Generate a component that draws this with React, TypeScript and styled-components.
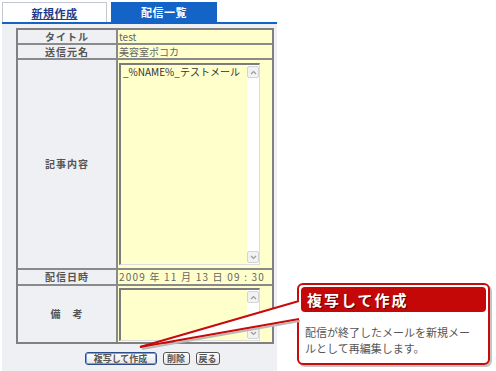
import React from 'react';
import styled, { createGlobalStyle } from 'styled-components';

const GlobalStyle = createGlobalStyle`
  html, body {
    margin: 0;
    padding: 0;
    background: #ffffff;
  }
  body {
    font-family: "Noto Sans CJK JP", "Liberation Sans", sans-serif;
  }
`;

const Page = styled.div`
  position: relative;
  width: 496px;
  height: 371px;
  overflow: hidden;
  padding-top: 2px;
  box-sizing: border-box;
`;

const TabBar = styled.div`
  margin-left: 2px;
  width: 275px;
  height: 20px;
  display: flex;
  gap: 4px;
  border-bottom: 2px solid #1464c8;
`;

const Tab = styled.div<{ $active?: boolean }>`
  width: ${(p) => (p.$active ? 106 : 105)}px;
  box-sizing: border-box;
  display: flex;
  align-items: center;
  justify-content: center;
  font-size: 11px;
  font-weight: bold;
  letter-spacing: 0.5px;
  background: ${(p) => (p.$active ? '#1464c8' : '#ffffff')};
  color: ${(p) => (p.$active ? '#ffffff' : '#1e3c8c')};
  border: ${(p) => (p.$active ? 'none' : '1px solid #c4c8d0')};
  border-bottom: none;
  text-decoration: ${(p) => (p.$active ? 'none' : 'underline')};
`;

const Panel = styled.div`
  margin-left: 2px;
  width: 275px;
  height: 347px;
  box-sizing: border-box;
  background: #eff0f3;
  padding: 4px 3px 0 14px;
`;

const Table = styled.div`
  width: 258px;
  box-sizing: border-box;
  border: 2px solid #808080;
  background: #8a8a8a;
  display: grid;
  grid-template-columns: 98px 1fr;
  grid-template-rows: 13px 13px 208px 14px 56px;
  gap: 2px;
`;

const Label = styled.div`
  background: #eef0f3;
  color: #555555;
  font-size: 10px;
  font-weight: bold;
  letter-spacing: 1px;
  display: flex;
  align-items: center;
  justify-content: center;
  white-space: pre;
  line-height: 1;
`;

const Value = styled.div<{ $spaced?: boolean }>`
  background: #ffffcc;
  color: #666666;
  font-size: 10px;
  display: flex;
  align-items: center;
  padding-left: 1px;
  letter-spacing: ${(p) => (p.$spaced ? '1.2px' : '0')};
  white-space: pre;
  line-height: 1;
`;

const AreaCell = styled.div`
  background: #ffffcc;
  display: flex;
  padding: 3px 12px 3px 1px;
`;

const FakeArea = styled.div`
  flex: 1;
  display: flex;
  box-sizing: border-box;
  border-top: 2px solid #7c7c7c;
  border-left: 2px solid #7c7c7c;
  border-right: 1px solid #dcdcdc;
  border-bottom: 1px solid #dcdcdc;
  background: #ffffcc;
`;

const AreaText = styled.div`
  flex: 1;
  padding: 1px 2px;
  font-size: 10px;
  color: #333333;
  line-height: 12px;
`;

const ScrollTrack = styled.div`
  width: 12px;
  background: #ffffff;
  display: flex;
  flex-direction: column;
  justify-content: space-between;
  padding: 1px 0;
  box-sizing: border-box;
`;

const ArrowBtn = styled.div`
  width: 10px;
  height: 10px;
  margin: 0 auto;
  border: 1px solid #d4d4d4;
  border-radius: 2px;
  background: #f2f2f2;
  display: flex;
  align-items: center;
  justify-content: center;
`;

const ButtonRow = styled.div`
  display: flex;
  justify-content: center;
  gap: 6px;
  width: 258px;
  padding: 8px 0 0 14px;
  box-sizing: border-box;
`;

const Button = styled.div<{ $focused?: boolean; $w: number }>`
  width: ${(p) => p.$w}px;
  height: 13px;
  box-sizing: border-box;
  border: 1px solid ${(p) => (p.$focused ? '#2c4c8c' : '#555555')};
  border-radius: 3px;
  background: linear-gradient(#ffffff, #e6e6e6);
  box-shadow: ${(p) => (p.$focused ? 'inset 0 0 0 1px #7aa0e0' : 'none')};
  color: #555555;
  font-size: 9px;
  font-weight: bold;
  display: flex;
  align-items: center;
  justify-content: center;
  line-height: 1;
`;

const Callout = styled.div`
  position: absolute;
  left: 297px;
  top: 283px;
  width: 193px;
  height: 82px;
  box-sizing: border-box;
  border: 2px solid #c80a0a;
  border-radius: 6px;
  background: #ffffff;
  box-shadow: 2px 2px 0 #c4c4c4;
  padding: 2px;
`;

const CalloutHead = styled.div`
  height: 25px;
  border-radius: 4px;
  background: #c40808;
  color: #ffffff;
  font-size: 15px;
  font-weight: bold;
  letter-spacing: 2px;
  display: flex;
  align-items: center;
  padding-left: 6px;
  text-shadow: 1px 1px 0 #6a0000;
`;

const CalloutBody = styled.div`
  padding: 12px 0 0 4px;
  font-size: 11px;
  line-height: 16px;
  color: #555555;
  white-space: nowrap;
`;

const Tail = styled.svg`
  position: absolute;
  left: 136px;
  top: 296px;
`;

const Chevron = ({ up }: { up?: boolean }) => (
  <svg width="7" height="5" viewBox="0 0 7 5">
    <path
      d={up ? 'M1 4 L3.5 1.5 L6 4' : 'M1 1 L3.5 3.5 L6 1'}
      fill="none"
      stroke="#9a9a9a"
      strokeWidth="1.2"
    />
  </svg>
);

const TextBox = ({ children }: { children?: React.ReactNode }) => (
  <FakeArea>
    <AreaText>{children}</AreaText>
    <ScrollTrack>
      <ArrowBtn>
        <Chevron up />
      </ArrowBtn>
      <ArrowBtn>
        <Chevron />
      </ArrowBtn>
    </ScrollTrack>
  </FakeArea>
);

const App = () => {
  return (
    <Page>
      <GlobalStyle />
      <TabBar>
        <Tab>新規作成</Tab>
        <Tab $active>配信一覧</Tab>
      </TabBar>
      <Panel>
        <Table>
          <Label>タイトル</Label>
          <Value>test</Value>
          <Label>送信元名</Label>
          <Value>美容室ポコカ</Value>
          <Label>記事内容</Label>
          <AreaCell>
            <TextBox>_%NAME%_テストメール</TextBox>
          </AreaCell>
          <Label>配信日時</Label>
          <Value $spaced>2009 年 11 月 13 日 09 : 30</Value>
          <Label>備　考</Label>
          <AreaCell style={{ paddingTop: 2, paddingBottom: 1 }}>
            <TextBox />
          </AreaCell>
        </Table>
        <ButtonRow>
          <Button $focused $w={72}>
            複写して作成
          </Button>
          <Button $w={27}>削除</Button>
          <Button $w={24}>戻る</Button>
        </ButtonRow>
      </Panel>
      <Callout>
        <CalloutHead>複写して作成</CalloutHead>
        <CalloutBody>
          配信が終了したメールを新規メー
          <br />
          ルとして再編集します。
        </CalloutBody>
      </Callout>
      <Tail width="170" height="60" viewBox="0 0 170 60">
        <polyline points="6,53 164,25" fill="none" stroke="#b8b8b8" strokeWidth="2" />
        <polygon points="4,51 164,4 164,24" fill="#ffffff" />
        <line x1="4" y1="51" x2="163" y2="5" stroke="#c80a0a" strokeWidth="2" />
        <line x1="4" y1="51" x2="163" y2="23" stroke="#c80a0a" strokeWidth="2" />
      </Tail>
    </Page>
  );
};

export default App;
